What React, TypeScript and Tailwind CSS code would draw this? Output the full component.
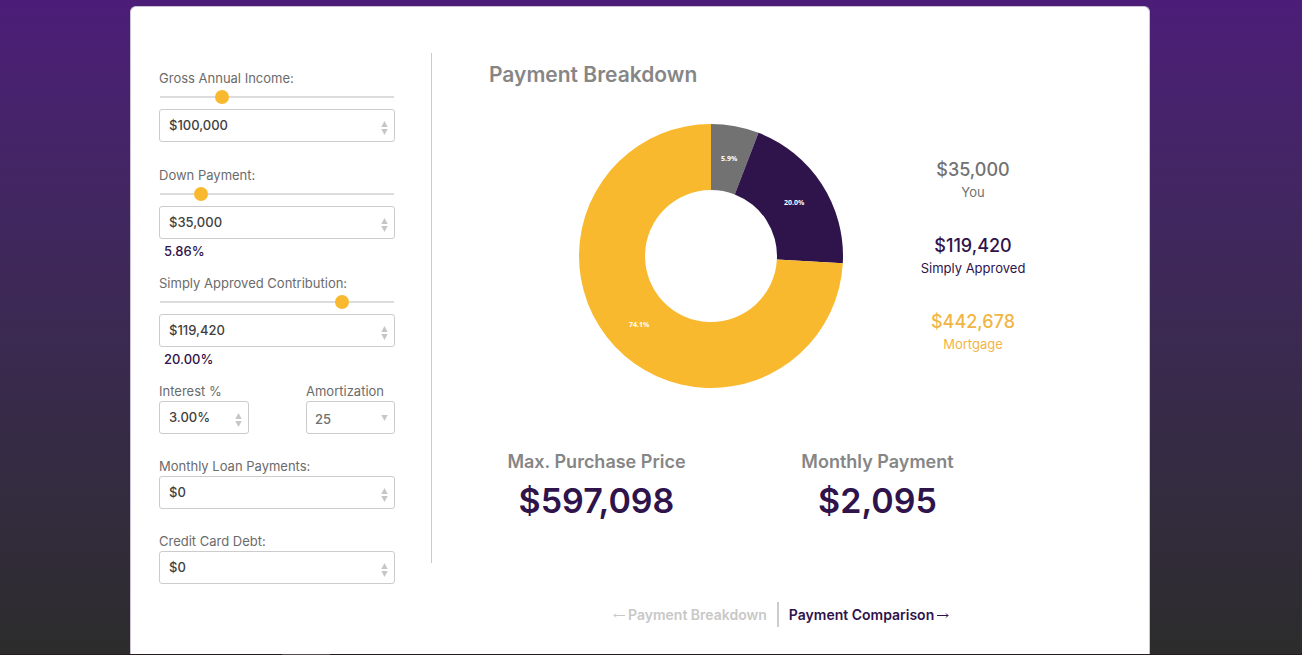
import { useState } from "react";

type StepperProps = { label: string };

function Stepper({ label }: StepperProps) {
  return (
    <span className="mt-1 flex w-5 shrink-0 flex-col items-center gap-0.5">
      <button type="button" aria-label={`Increase ${label}`} className="block">
        <svg viewBox="0 0 7 6" className="block h-1.5 w-[7px] fill-[#c6c6c6]">
          <path d="M3.5 0 6.7 6H.3Z" />
        </svg>
      </button>
      <button type="button" aria-label={`Decrease ${label}`} className="block">
        <svg viewBox="0 0 7 6" className="block h-1.5 w-[7px] fill-[#c6c6c6]">
          <path d="M.3 0H6.7L3.5 6Z" />
        </svg>
      </button>
    </span>
  );
}

type FieldProps = {
  id: string;
  label: string;
  value: string;
  slider?: number;
  percent?: string;
};

function Field({ id, label, value, slider, percent }: FieldProps) {
  const [position, setPosition] = useState(slider ?? 0);
  const [text, setText] = useState(value);
  return (
    <div>
      <label htmlFor={id} className="block text-[13px] leading-5 whitespace-nowrap text-[#6b6b6b]">
        {label}
      </label>
      {slider !== undefined && (
        <div className="mb-[3px] px-px">
          <input
            type="range"
            aria-label={`${label} slider`}
            min={0}
            max={200}
            value={position}
            onChange={(e) => setPosition(Number(e.target.value))}
            className="block h-[18px] w-full cursor-pointer appearance-none bg-transparent [&::-webkit-slider-runnable-track]:h-0.5 [&::-webkit-slider-runnable-track]:bg-[#dcdcdc] [&::-webkit-slider-thumb]:-mt-1.5 [&::-webkit-slider-thumb]:h-3.5 [&::-webkit-slider-thumb]:w-3.5 [&::-webkit-slider-thumb]:appearance-none [&::-webkit-slider-thumb]:rounded-full [&::-webkit-slider-thumb]:bg-[#f9b92e]"
          />
        </div>
      )}
      <div className="flex h-[33px] items-center rounded-[3px] border border-[#cccccc] bg-white">
        <input
          id={id}
          type="text"
          value={text}
          onChange={(e) => setText(e.target.value)}
          className="h-full w-0 min-w-0 flex-1 bg-transparent pb-0.5 pl-[9px] text-[13px] font-medium text-[#3f3f3f] outline-none"
        />
        <Stepper label={label} />
      </div>
      {percent && (
        <p className="mt-0.5 mb-px pl-[5px] text-[13px] leading-5 font-medium text-[#2f134b]">{percent}</p>
      )}
    </div>
  );
}

type Slice = { share: number; fill: string; text: string };

const slices: Slice[] = [
  { share: 0.0586, fill: "#727272", text: "5.9%" },
  { share: 0.2, fill: "#2f134b", text: "20.0%" },
  { share: 0.7414, fill: "#f9b92e", text: "74.1%" },
];

function point(radius: number, turn: number) {
  const angle = turn * 2 * Math.PI;
  return [132 + radius * Math.sin(angle), 132 - radius * Math.cos(angle)];
}

function Donut() {
  let start = 0;
  return (
    <svg viewBox="0 0 264 264" role="img" aria-label="Payment breakdown chart" className="block h-[264px] w-[264px] shrink-0">
      {slices.map((slice) => {
        const end = start + slice.share;
        const large = slice.share > 0.5 ? 1 : 0;
        const d = `M${point(132, start)} A132 132 0 ${large} 1 ${point(132, end)} L${point(66, end)} A66 66 0 ${large} 0 ${point(66, start)}Z`;
        const [x, y] = point(99, (start + end) / 2);
        start = end;
        return (
          <g key={slice.text}>
            <path d={d} fill={slice.fill} />
            <text
              x={x}
              y={y}
              textAnchor="middle"
              dominantBaseline="central"
              className="fill-white font-['Open_Sans',sans-serif] text-[7px] font-bold"
            >
              {slice.text}
            </text>
          </g>
        );
      })}
    </svg>
  );
}

const legend = [
  { amount: "$35,000", name: "You", color: "text-[#727272]" },
  { amount: "$119,420", name: "Simply Approved", color: "text-[#2f134b]" },
  { amount: "$442,678", name: "Mortgage", color: "text-[#f2b544]" },
];

const totals = [
  { name: "Max. Purchase Price", amount: "$597,098" },
  { name: "Monthly Payment", amount: "$2,095" },
];

export default function App() {
  return (
    <div className="flex min-h-screen flex-col font-['Inter','Liberation_Sans',sans-serif]">
      <div className="flex flex-1 flex-col bg-linear-to-b from-[#4c1d78] to-[#2c2c2c] pt-1.5 pr-[22px]">
        <main className="mx-auto flex w-full max-w-[1020px] flex-1 items-start rounded-t-md border border-b-0 border-[#cbc3d3] bg-white pt-[46px] pb-[26px]">
          <form className="w-[264px] shrink-0 pt-[15px] pl-7">
            <div className="flex flex-col gap-[11px]">
              <div className="mb-3">
                <Field id="income" label="Gross Annual Income:" value="$100,000" slider={50} />
              </div>
              <Field id="down" label="Down Payment:" value="$35,000" slider={31} percent="5.86%" />
              <Field
                id="contribution"
                label="Simply Approved Contribution:"
                value="$119,420"
                slider={159}
                percent="20.00%"
              />
              <div className="mb-[11px] flex justify-between">
                <div className="w-[90px]">
                  <Field id="interest" label="Interest %" value="3.00%" />
                </div>
                <div className="w-[89px]">
                  <label htmlFor="amortization" className="block text-[13px] leading-5 text-[#6b6b6b]">
                    Amortization
                  </label>
                  <div className="flex h-[33px] items-center rounded-[3px] border border-[#cccccc] bg-white">
                    <select
                      id="amortization"
                      defaultValue="25"
                      className="h-full min-w-0 flex-1 appearance-none bg-transparent pt-1 pl-2 text-[13px] font-medium text-[#707070] outline-none"
                    >
                      <option>15</option>
                      <option>20</option>
                      <option>25</option>
                      <option>30</option>
                    </select>
                    <span className="flex w-5 justify-center">
                      <svg viewBox="0 0 7 6" aria-hidden="true" className="block h-1.5 w-[7px] fill-[#c6c6c6]">
                        <path d="M.3 0H6.7L3.5 6Z" />
                      </svg>
                    </span>
                  </div>
                </div>
              </div>
              <div className="mb-[11px]">
                <Field id="loans" label="Monthly Loan Payments:" value="$0" />
              </div>
              <Field id="cards" label="Credit Card Debt:" value="$0" />
            </div>
          </form>

          <div className="ml-9 h-[510px] w-px shrink-0 bg-[#cccccc]" />

          <section className="min-w-0 flex-1">
            <h1 className="mt-1.5 pl-[57px] text-[21px] leading-8 font-semibold text-[#868686]">Payment Breakdown</h1>

            <div className="mt-[33px] flex gap-16 pl-[147px]">
              <Donut />
              <ul className="flex w-[132px] flex-col gap-8 pt-[34px] text-center">
                {legend.map((item) => (
                  <li key={item.name} className={item.color}>
                    <p className="text-lg leading-6 font-medium">{item.amount}</p>
                    <p className="text-[13px] leading-5">{item.name}</p>
                  </li>
                ))}
              </ul>
            </div>

            <dl className="mt-[62px] ml-6 grid max-w-[562px] grid-cols-2 text-center">
              {totals.map((item) => (
                <div key={item.name}>
                  <dt className="text-lg leading-6 font-semibold text-[#868686]">{item.name}</dt>
                  <dd className="mt-[5px] text-[34px] leading-[44px] font-semibold text-[#2f134b]">{item.amount}</dd>
                </div>
              ))}
            </dl>

            <nav className="mt-[79px] flex items-center pl-[181px] text-sm leading-[25px] font-semibold whitespace-nowrap">
              <a href="#breakdown" className="flex items-center gap-[3px] text-[#c8c8c8]">
                <svg viewBox="0 0 12 6" aria-hidden="true" className="h-1.5 w-3 fill-none stroke-current">
                  <path d="M12 3.5H1M3 1.5 1 3.5 3 5.5" />
                </svg>
                Payment Breakdown
              </a>
              <span className="mr-2.5 ml-2.5 h-[25px] w-0.5 bg-[#cccccc]" />
              <a href="#comparison" className="flex items-center gap-[3px] text-[#2f134b]">
                Payment Comparison
                <svg viewBox="0 0 12 6" aria-hidden="true" className="h-1.5 w-3 fill-none stroke-current">
                  <path d="M0 3.5H11M9 1.5 11 3.5 9 5.5" />
                </svg>
              </a>
            </nav>
          </section>
        </main>
      </div>
      <footer className="h-px bg-[#2a1a1c] pl-[282px]">
        <div className="h-px w-12 bg-[#55494b]" />
      </footer>
    </div>
  );
}
